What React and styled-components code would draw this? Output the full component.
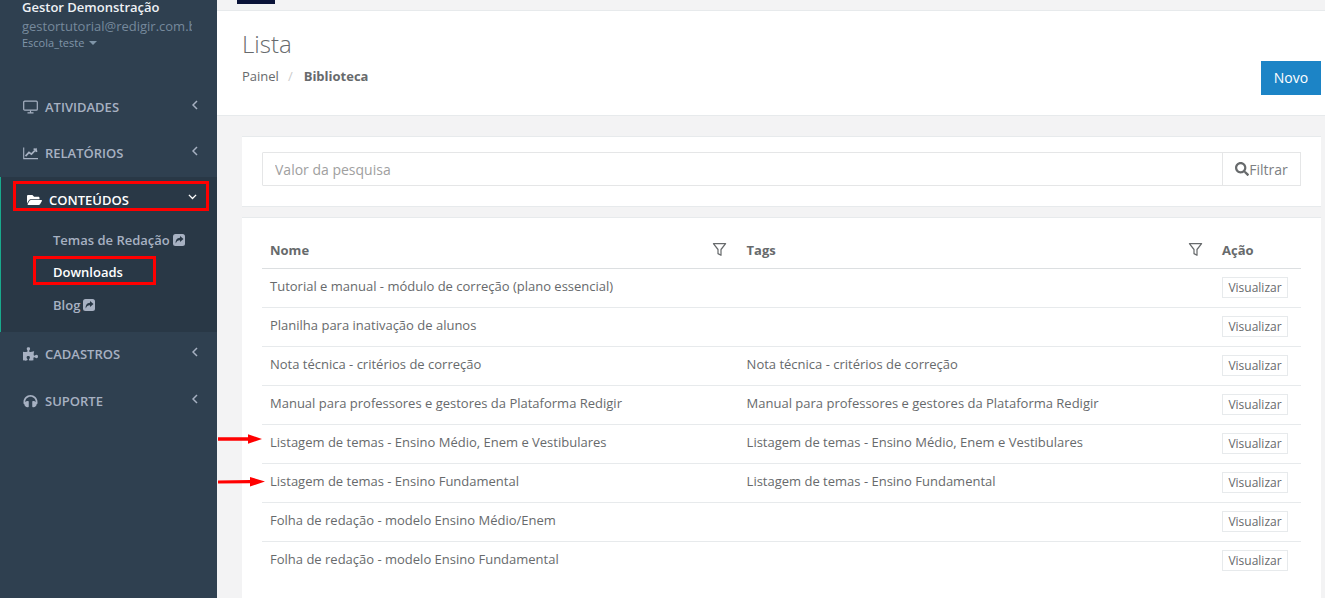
import React from 'react';
import styled, { createGlobalStyle } from 'styled-components';
import { FaFolderOpen, FaPuzzlePiece, FaHeadphones, FaSearch } from 'react-icons/fa';

const GlobalStyle = createGlobalStyle`
  html, body {
    margin: 0;
    height: 100%;
    overflow: hidden;
    background: #f3f3f4;
  }
  body {
    font-family: "Open Sans", "Liberation Sans", sans-serif;
    font-size: 13px;
    color: #676a6c;
  }
  * {
    box-sizing: border-box;
  }
`

const Page = styled.div`
  display: flex;
  height: 598px;
  overflow: hidden;
`

const Sidebar = styled.aside`
  width: 217px;
  flex-shrink: 0;
  background: #2f4050;
  display: flex;
  flex-direction: column;
`

const Profile = styled.div`
  height: 84px;
  padding: 0 25px 0 22px;
  display: flex;
  flex-direction: column;
  overflow: hidden;
`

const ProfileName = styled.strong`
  font-size: 13px;
  line-height: 15px;
  font-weight: 600;
  color: #eef1f5;
`

const ProfileMail = styled.span`
  margin-top: 2px;
  font-size: 13px;
  line-height: 18px;
  color: #76899c;
  white-space: nowrap;
  overflow: hidden;
`

const ProfileSchool = styled.span`
  display: flex;
  align-items: center;
  gap: 5px;
  font-size: 11px;
  line-height: 15px;
  color: #8095a8;
`

const Caret = styled.i`
  width: 0;
  height: 0;
  border-left: 4px solid transparent;
  border-right: 4px solid transparent;
  border-top: 4px solid #8095a8;
`

const NavGroup = styled.div`
  background: #293846;
  border-left: 1px solid #19aa8d;
  height: 154.5px;
`

const NavItem = styled.div`
  position: relative;
  height: ${props => props.$active ? '46px' : '46.5px'};
  display: flex;
  align-items: center;
  gap: 7px;
  padding: ${props => props.$active ? '0 20px 0 26px' : '0 19px 1px 23px'};
  font-size: 13px;
  font-weight: 600;
  color: ${props => props.$active ? '#fff' : '#a7b1c2'};
  svg.main {
    width: 15px;
    height: 14px;
    flex-shrink: 0;
  }
`

const Chevron = styled.svg`
  margin-left: auto;
  margin-top: ${props => props.$down ? '-6px' : '-4px'};
  width: ${props => props.$down ? '9px' : '6px'};
  height: ${props => props.$down ? '5.4px' : '10px'};
  fill: none;
  stroke: currentColor;
  stroke-width: 1.5;
`

const SubList = styled.div`
  display: flex;
  flex-direction: column;
  padding-top: 0.5px;
`

const SubItem = styled.div`
  position: relative;
  height: 32.5px;
  padding-left: 52px;
  display: flex;
  align-items: center;
  gap: 3px;
  font-size: 13px;
  font-weight: 600;
  color: ${props => props.$active ? '#fff' : '#a7b1c2'};
`

const RedBox = styled.div`
  position: absolute;
  border: 3px solid #f00;
  pointer-events: none;
`

const NavBox = styled(RedBox)`
  left: 12px;
  top: 4px;
  width: 196px;
  height: 30px;
`

const SubBox = styled(RedBox)`
  left: 32px;
  top: 0;
  width: 123px;
  height: 29px;
`

const Main = styled.main`
  flex: 1;
  min-width: 0;
`

const TopBar = styled.div`
  height: 11px;
  padding-left: 20px;
  border-bottom: 1px solid #e7eaec;
`

const TopTab = styled.div`
  width: 38px;
  height: 4px;
  background: #0a1338;
`

const Header = styled.header`
  height: 105px;
  background: #fff;
  border-bottom: 1px solid #e7eaec;
  padding: 0 4px 0 25px;
  display: flex;
  justify-content: space-between;
`

const Title = styled.h2`
  margin: 17px 0 0;
  font-size: 24px;
  line-height: 32px;
  font-weight: 300;
`

const Breadcrumb = styled.div`
  margin-top: 7px;
  display: flex;
  line-height: 18px;
  b {
    font-weight: 700;
  }
`

const Slash = styled.span`
  padding: 0 11px 0 9px;
  color: #ccc;
`

const NewButton = styled.button`
  align-self: flex-start;
  margin-top: 50px;
  width: 60px;
  height: 34px;
  border: 0;
  background: #1c84c6;
  color: #fff;
  font: 400 14px "Open Sans", sans-serif;
  padding: 0 0 1px;
`

const Content = styled.div`
  padding: 20px 4px 0 25px;
  display: flex;
  flex-direction: column;
  gap: 10px;
`

const Card = styled.section`
  background: #fff;
  border-top: 1px solid #e7eaec;
  padding: ${props => props.$padding};
  ${props => props.$bordered && 'border-bottom: 1px solid #e7eaec;'}
`

const SearchRow = styled.div`
  display: flex;
  height: 34px;
`

const SearchInput = styled.input`
  flex: 1;
  min-width: 0;
  height: 34px;
  padding: 0 12px;
  border: 1px solid #e5e6e7;
  border-radius: 1px 0 0 1px;
  outline: 0;
  font: 400 14px "Open Sans", sans-serif;
  color: #676a6c;
  &::placeholder {
    color: #a0a0a0;
    opacity: 1;
  }
`

const FilterButton = styled.button`
  width: 79px;
  height: 34px;
  margin-left: -1px;
  padding: 0;
  border: 1px solid #e5e6e7;
  background: #fff;
  display: flex;
  align-items: center;
  justify-content: center;
  font: 400 14px "Open Sans", sans-serif;
  color: #7d8083;
  svg {
    width: 14px;
    height: 14px;
    color: #676a6c;
  }
`

const Table = styled.table`
  width: 1039px;
  border-collapse: collapse;
  table-layout: fixed;
`

const HeadCell = styled.th`
  height: 50px;
  padding: 14px ${props => props.$narrow ? '7px' : '8px'} 0;
  text-align: left;
  font-size: 13px;
  font-weight: 700;
  border-bottom: 1px solid #dcdfe1;
  width: ${props => props.$width};
`

const HeadInner = styled.div`
  display: flex;
  justify-content: space-between;
  align-items: center;
  svg {
    width: 15px;
    height: 15px;
    margin: 0 4px 0 0;
  }
`

const Row = styled.tr`
  height: 39px;
  border-bottom: 1px solid #e7eaec;
  &:last-child {
    border-bottom: 0;
  }
`

const Cell = styled.td`
  position: relative;
  padding: 0 8px 4px;
  font-size: 13px;
  white-space: nowrap;
`

const ActionCell = styled(Cell)`
  padding: 0 7px;
`

const ViewButton = styled.button`
  display: block;
  width: 66px;
  height: 21px;
  padding: 0;
  border: 1px solid #e7eaec;
  background: #fff;
  font: 400 12px "Open Sans", sans-serif;
  color: #676a6c;
`

const Arrow = styled.svg`
  position: absolute;
  left: -44px;
  top: ${props => props.$top}px;
  width: 48px;
  height: 10px;
`

const ShareIcon = () => (
  <svg width="12" height="12" viewBox="0 0 12 12">
    <rect x="0" y="0" width="12" height="12" rx="2.5" fill="#a7b1c2" />
    <path d="M7 2 L10.5 5 L7 8 V6.3 C5 6.2 3.6 7 2.8 9.5 C2.2 6.5 4 4 7 3.8 Z" fill="#293846" />
  </svg>
)

const FunnelIcon = () => (
  <svg viewBox="0 0 16 16" fill="none" stroke="#676a6c" strokeWidth="1.3" strokeLinejoin="round">
    <path d="M1.5 1.8 H14.5 L9.6 8 V14.2 L6.4 12.4 V8 Z" />
  </svg>
)

const DesktopIcon = ({ className }) => (
  <svg className={className} viewBox="0 0 15 14" fill="none" stroke="currentColor">
    <rect x="0.7" y="1.2" width="13.6" height="9" rx="1" strokeWidth="1.2" />
    <path d="M7.5 10.5 V12.6 M4.5 12.8 H10.5" strokeWidth="1.2" />
  </svg>
)

const ChartIcon = ({ className }) => (
  <svg className={className} viewBox="0 0 15 14" fill="none" stroke="currentColor">
    <path d="M0.7 1.5 V12.6 H15" strokeWidth="1.1" />
    <path d="M2.5 10.2 L6 6.4 L8.4 8.2 L13 3.4 L13.6 6 M13 3.4 L10.6 3.2" strokeWidth="1.7" />
  </svg>
)

const rows = [
  ['Tutorial e manual - módulo de correção (plano essencial)', ''],
  ['Planilha para inativação de alunos', ''],
  ['Nota técnica - critérios de correção', 'Nota técnica - critérios de correção'],
  ['Manual para professores e gestores da Plataforma Redigir', 'Manual para professores e gestores da Plataforma Redigir'],
  ['Listagem de temas - Ensino Médio, Enem e Vestibulares', 'Listagem de temas - Ensino Médio, Enem e Vestibulares', 'flat'],
  ['Listagem de temas - Ensino Fundamental', 'Listagem de temas - Ensino Fundamental', 'tilted'],
  ['Folha de redação - modelo Ensino Médio/Enem', ''],
  ['Folha de redação - modelo Ensino Fundamental', ''],
]

const RedArrow = ({ kind }) => (
  <Arrow $top={kind === 'flat' ? 9 : 13} viewBox="0 0 48 10">
    {kind === 'flat'
      ? <path d="M0 3.2 H30 V0.2 L44 5 L30 9.8 V6.8 H0 Z" fill="#f00" />
      : <path d="M0 3.5 L32 3 V0 L47 4.5 L32 9.6 V6.2 L0 6.5 Z" fill="#f00" />}
  </Arrow>
)

const navBefore = [
  { label: 'ATIVIDADES', Icon: DesktopIcon },
  { label: 'RELATÓRIOS', Icon: ChartIcon },
]

const navAfter = [
  { label: 'CADASTROS', Icon: FaPuzzlePiece },
  { label: 'SUPORTE', Icon: FaHeadphones },
]

const ClosedItem = ({ label, Icon }) => (
  <NavItem>
    <Icon className="main" />
    {label}
    <Chevron viewBox="0 0 6 10"><path d="M5 1 L1 5 L5 9" /></Chevron>
  </NavItem>
)

export default function App() {
  return (
    <Page>
      <GlobalStyle />
      <Sidebar>
        <Profile>
          <ProfileName>Gestor Demonstração</ProfileName>
          <ProfileMail>gestortutorial@redigir.com.br</ProfileMail>
          <ProfileSchool>Escola_teste <Caret /></ProfileSchool>
        </Profile>
        {navBefore.map(item => <ClosedItem key={item.label} {...item} />)}
        <NavGroup>
          <NavItem $active>
            <FaFolderOpen className="main" />
            CONTEÚDOS
            <Chevron $down viewBox="0 0 10 6"><path d="M1 1 L5 5 L9 1" /></Chevron>
            <NavBox />
          </NavItem>
          <SubList>
            <SubItem>Temas de Redação <ShareIcon /></SubItem>
            <SubItem $active>Downloads<SubBox /></SubItem>
            <SubItem>Blog <ShareIcon /></SubItem>
          </SubList>
        </NavGroup>
        {navAfter.map(item => <ClosedItem key={item.label} {...item} />)}
      </Sidebar>
      <Main>
        <TopBar><TopTab /></TopBar>
        <Header>
          <div>
            <Title>Lista</Title>
            <Breadcrumb>
              Painel<Slash>/</Slash><b>Biblioteca</b>
            </Breadcrumb>
          </div>
          <NewButton>Novo</NewButton>
        </Header>
        <Content>
          <Card $padding="15px 20px 20px" $bordered>
            <SearchRow>
              <SearchInput placeholder="Valor da pesquisa" />
              <FilterButton><FaSearch />Filtrar</FilterButton>
            </SearchRow>
          </Card>
          <Card $padding="0 20px 20px">
            <Table>
              <thead>
                <tr>
                  <HeadCell $width="476.6px"><HeadInner>Nome <FunnelIcon /></HeadInner></HeadCell>
                  <HeadCell $width="476.4px"><HeadInner>Tags <FunnelIcon /></HeadInner></HeadCell>
                  <HeadCell $width="86px" $narrow>Ação</HeadCell>
                </tr>
              </thead>
              <tbody>
                {rows.map(([name, tags, arrow]) => (
                  <Row key={name}>
                    <Cell>{arrow && <RedArrow kind={arrow} />}{name}</Cell>
                    <Cell>{tags}</Cell>
                    <ActionCell><ViewButton>Visualizar</ViewButton></ActionCell>
                  </Row>
                ))}
              </tbody>
            </Table>
          </Card>
        </Content>
      </Main>
    </Page>
  );
}
